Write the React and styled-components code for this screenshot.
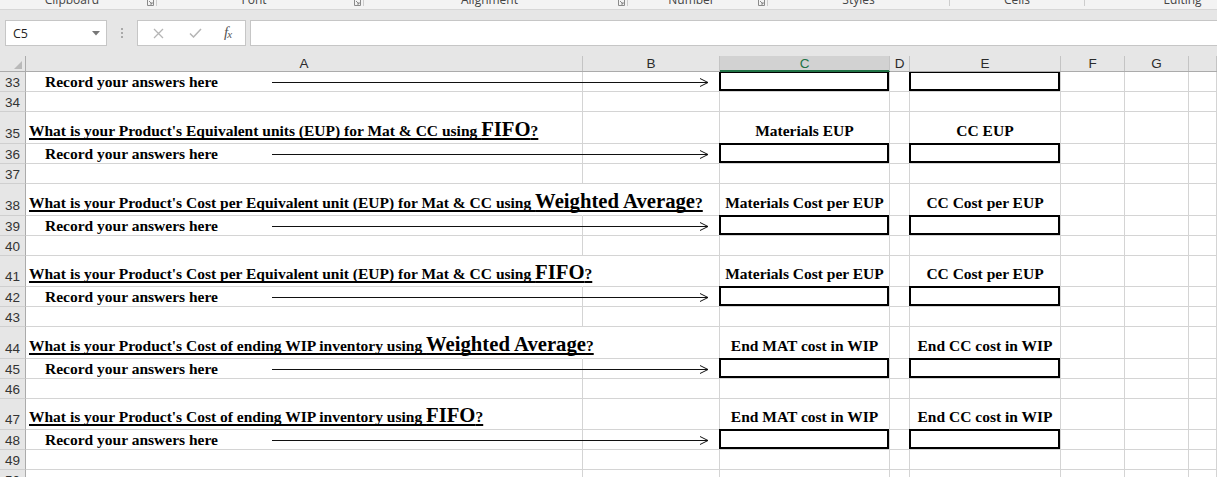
import React from 'react';
import styled, { createGlobalStyle } from 'styled-components';

const GlobalStyle = createGlobalStyle`
  html, body {
    margin: 0;
    padding: 0;
    background: #fff;
    overflow: hidden;
  }
  body {
    font-family: "Open Sans", "Liberation Sans", sans-serif;
  }
`;

const COLS = '26px 557px 137px 170px 20px 151px 64px 64px 1fr';

const groups = [
  { name: 'Clipboard', w: 157, launcher: true },
  { name: 'Font', w: 207, launcher: true },
  { name: 'Alignment', w: 264, launcher: true },
  { name: 'Number', w: 140, launcher: true },
  { name: 'Styles', w: 182 },
  { name: 'Cells', w: 135 },
  { name: 'Editing', w: 195, last: true },
];

const columns = ['A', 'B', 'C', 'D', 'E', 'F', 'G', ''];

const sections = [
  { q: "What is your Product's Equivalent units (EUP) for Mat & CC using ", big: 'FIFO', c: 'Materials EUP', e: 'CC EUP', h: 32 },
  { q: "What is your Product's Cost per Equivalent unit (EUP) for Mat & CC using ", big: 'Weighted Average', c: 'Materials Cost per EUP', e: 'CC Cost per EUP', h: 32, spill: true },
  { q: "What is your Product's Cost per Equivalent unit (EUP) for Mat & CC using ", big: 'FIFO', c: 'Materials Cost per EUP', e: 'CC Cost per EUP', h: 31, spill: true },
  { q: "What is your Product's Cost of ending WIP inventory using ", big: 'Weighted Average', c: 'End MAT cost in WIP', e: 'End CC cost in WIP', h: 32, spill: true },
  { q: "What is your Product's Cost of ending WIP inventory using ", big: 'FIFO', c: 'End MAT cost in WIP', e: 'End CC cost in WIP', h: 31 },
];

const Ribbon = styled.div`
  height: 9px;
  background: #f3f3f3;
  border-bottom: 1px solid #d6d6d6;
  display: flex;
  overflow: hidden;
`;

const Group = styled.div`
  width: ${(p) => p.$w}px;
  flex: none;
  height: 6px;
  display: flex;
  border-right: ${(p) => (p.$last ? 'none' : '1px solid #cdcdcd')};
  box-sizing: border-box;
`;

const GroupLabel = styled.div`
  flex: 1;
  margin-top: -7px;
  text-align: center;
  font-size: 12px;
  line-height: 14px;
  color: #444;
`;

const Launcher = styled.div`
  width: 12px;
  flex: none;
  display: flex;
  justify-content: center;
  svg {
    display: block;
  }
`;

const FormulaBar = styled.div`
  height: 46px;
  box-sizing: border-box;
  background: #e6e6e6;
  padding: 10px 0 0 5px;
  display: flex;
  align-items: flex-start;
`;

const NameBox = styled.div`
  width: 102px;
  height: 26px;
  box-sizing: border-box;
  background: #fff;
  border: 1px solid #c6c6c6;
  display: flex;
  align-items: center;
  justify-content: space-between;
  padding: 0 6px 0 7px;
  font-size: 12.5px;
  color: #222;
`;

const Dots = styled.div`
  width: 30px;
  height: 26px;
  display: flex;
  flex-direction: column;
  align-items: center;
  justify-content: center;
  gap: 2px;
  span {
    width: 2px;
    height: 2px;
    background: #a9a9a9;
  }
`;

const FxBox = styled.div`
  width: 109px;
  height: 26px;
  box-sizing: border-box;
  background: #fff;
  border: 1px solid #c6c6c6;
  display: grid;
  grid-template-columns: 40px 34px 1fr;
  align-items: center;
  justify-items: center;
  margin-right: 4px;
`;

const Fx = styled.span`
  font-family: "Liberation Serif", serif;
  font-style: italic;
  font-size: 15px;
  line-height: 15px;
  color: #555;
  letter-spacing: -1px;
  padding-right: 2px;
  sub {
    font-size: 11px;
    vertical-align: -1px;
  }
`;

const FormulaInput = styled.div`
  flex: 1;
  height: 26px;
  box-sizing: border-box;
  background: #fff;
  border: 1px solid #c6c6c6;
  border-right: none;
`;

const HeaderRow = styled.div`
  display: grid;
  grid-template-columns: ${COLS};
  height: 16px;
  box-sizing: border-box;
  background: #e6e6e6;
  border-bottom: 1px solid #ababab;
`;

const Corner = styled.div`
  border-right: 1px solid #ababab;
  display: flex;
  justify-content: flex-end;
  align-items: flex-end;
  padding: 0 3px 2px 0;
  svg {
    display: block;
  }
`;

const ColHead = styled.div`
  border-right: 1px solid #c4c4c4;
  display: flex;
  align-items: center;
  justify-content: center;
  font-family: "Liberation Sans", Arial, sans-serif;
  font-size: 13.5px;
  line-height: 15px;
  color: ${(p) => (p.$selected ? '#217346' : '#2b2b2b')};
  background: ${(p) => (p.$selected ? '#d2d2d2' : 'transparent')};
  box-shadow: ${(p) => (p.$selected ? 'inset 0 -1px 0 #217346, 0 1px 0 #217346' : 'none')};
`;

const Body = styled.div`
  height: 405px;
  overflow: hidden;
  background: #fff;
`;

const Row = styled.div`
  display: grid;
  grid-template-columns: ${COLS};
  height: ${(p) => p.$h}px;
  position: relative;
`;

const RowNum = styled.div`
  background: #e6e6e6;
  border-right: 1px solid #ababab;
  border-bottom: 1px solid #cfcfcf;
  display: flex;
  align-items: flex-end;
  justify-content: center;
  padding-bottom: ${(p) => (p.$tall ? 2 : 1)}px;
  font-family: "Liberation Sans", Arial, sans-serif;
  font-size: 13.5px;
  line-height: 15px;
  color: #333;
`;

const Cell = styled.div`
  position: relative;
  border-right: 1px solid ${(p) => (p.$spill ? 'transparent' : '#d4d4d4')};
  border-bottom: 1px solid #d4d4d4;
  display: flex;
  align-items: flex-end;
  justify-content: ${(p) => (p.$center ? 'center' : 'flex-start')};
  padding-left: ${(p) => p.$indent || 0}px;
  padding-bottom: ${(p) => (p.$tall ? 4 : 1)}px;
  white-space: nowrap;
  font-family: "Liberation Serif", "Times New Roman", serif;
  font-weight: bold;
  font-size: 15.5px;
  line-height: 16px;
  color: #000;
`;

const Question = styled.span`
  text-decoration: underline;
  text-decoration-thickness: 2px;
  text-underline-offset: 2px;
  text-decoration-skip-ink: none;
`;

const Big = styled.span`
  font-size: 20.7px;
`;

const AnswerBox = styled.div`
  position: absolute;
  top: -1px;
  left: -1px;
  right: 0;
  bottom: 0;
  border: 2px solid #000;
`;

const Arrow = styled.svg`
  position: absolute;
  left: 272px;
  top: 6px;
  width: 437px;
  height: 9px;
  overflow: visible;
`;

function RibbonStrip() {
  return (
    <Ribbon>
      {groups.map((g) => (
        <Group key={g.name} $w={g.w} $last={g.last}>
          <GroupLabel>{g.name}</GroupLabel>
          {g.launcher && (
            <Launcher>
              <svg width="7" height="6" viewBox="0 0 7 6">
                <path d="M0.5 0 V5.5 H6.5 V0" fill="none" stroke="#8a8a8a" strokeWidth="1" />
                <path d="M2 1 L5 4 M3 4 H5 V2" fill="none" stroke="#8a8a8a" strokeWidth="1" />
              </svg>
            </Launcher>
          )}
        </Group>
      ))}
    </Ribbon>
  );
}

function Formula() {
  return (
    <FormulaBar>
      <NameBox>
        <span>C5</span>
        <svg width="8" height="5" viewBox="0 0 8 5">
          <path d="M0 0 H8 L4 4.5 Z" fill="#777" />
        </svg>
      </NameBox>
      <Dots>
        <span />
        <span />
        <span />
      </Dots>
      <FxBox>
        <svg width="11" height="11" viewBox="0 0 11 11">
          <path d="M1 1 L10 10 M10 1 L1 10" stroke="#b5b5b5" strokeWidth="1.3" fill="none" />
        </svg>
        <svg width="13" height="10" viewBox="0 0 13 10">
          <path d="M1 5.5 L4.5 9 L12 1" stroke="#b5b5b5" strokeWidth="1.5" fill="none" />
        </svg>
        <Fx>
          f<sub>x</sub>
        </Fx>
      </FxBox>
      <FormulaInput />
    </FormulaBar>
  );
}

function Headers() {
  return (
    <HeaderRow>
      <Corner>
        <svg width="8" height="8" viewBox="0 0 8 8">
          <path d="M8 0 V8 H0 Z" fill="#b9b9b9" />
        </svg>
      </Corner>
      {columns.map((c, i) => (
        <ColHead key={i} $selected={c === 'C'}>
          {c}
        </ColHead>
      ))}
    </HeaderRow>
  );
}

function EmptyCells({ tall }) {
  return columns.map((c, i) => <Cell key={`${c}${i}`} $tall={tall} />);
}

function AnswerRow({ n }) {
  return (
    <Row $h={20}>
      <RowNum>{n}</RowNum>
      <Cell $indent={19}>Record your answers here</Cell>
      <Cell />
      <Cell>
        <AnswerBox />
      </Cell>
      <Cell />
      <Cell>
        <AnswerBox />
      </Cell>
      <Cell />
      <Cell />
      <Cell />
      <Arrow viewBox="0 0 437 9">
        <path d="M0 4.5 H436" stroke="#111" strokeWidth="1" fill="none" />
        <path d="M428 0.5 L436 4.5 L428 8.5" stroke="#111" strokeWidth="1" fill="none" />
      </Arrow>
    </Row>
  );
}

function BlankRow({ n }) {
  return (
    <Row $h={20}>
      <RowNum>{n}</RowNum>
      <EmptyCells />
    </Row>
  );
}

function QuestionRow({ n, s }) {
  return (
    <Row $h={s.h}>
      <RowNum $tall>{n}</RowNum>
      <Cell $tall $indent={3} $spill={s.spill}>
        <Question>
          {s.q}
          <Big>{s.big}</Big>?
        </Question>
      </Cell>
      <Cell $tall />
      <Cell $tall $center>
        {s.c}
      </Cell>
      <Cell $tall />
      <Cell $tall $center>
        {s.e}
      </Cell>
      <Cell $tall />
      <Cell $tall />
      <Cell $tall />
    </Row>
  );
}

export default function App() {
  let n = 33;
  return (
    <>
      <GlobalStyle />
      <RibbonStrip />
      <Formula />
      <Headers />
      <Body>
        <AnswerRow n={n++} />
        <BlankRow n={n++} />
        {sections.map((s) => {
          const q = n++;
          const a = n++;
          const b = n++;
          return (
            <React.Fragment key={q}>
              <QuestionRow n={q} s={s} />
              <AnswerRow n={a} />
              <BlankRow n={b} />
            </React.Fragment>
          );
        })}
        <BlankRow n={n++} />
      </Body>
    </>
  );
}
